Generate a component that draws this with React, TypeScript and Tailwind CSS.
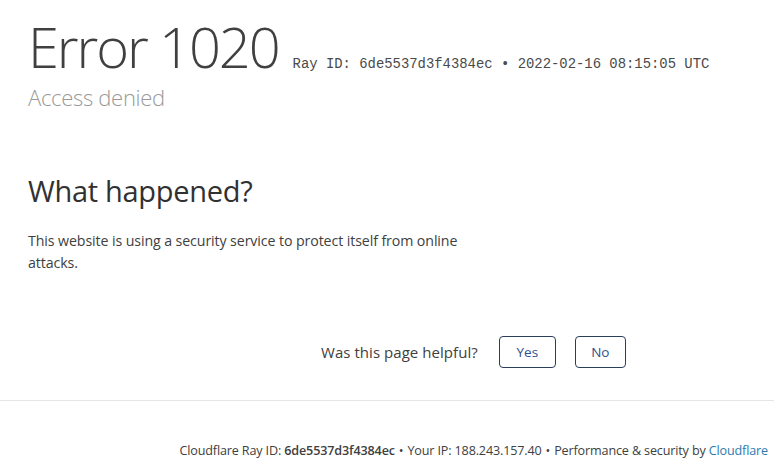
export default function App() {
  return (
    <div className="min-h-[464px] w-[774px] overflow-hidden bg-white font-['Open_Sans','Noto_Sans',sans-serif] text-[#404040]">
      <div className="px-[28px] pt-[16px]">
        <div className="flex items-baseline gap-[14px]">
          <h1 className="text-[56px] font-light leading-[60px] tracking-[-2.1px] text-[#404040]">
            Error 1020
          </h1>
          <span className="font-['Liberation_Mono','Courier_New',monospace] text-[13.9px] text-[#4a4a4a]">
            Ray ID: 6de5537d3f4384ec • 2022-02-16 08:15:05 UTC
          </span>
        </div>
        <h2 className="mt-[6px] text-[22px] font-light leading-[30px] tracking-[-0.3px] text-[#999999]">
          Access denied
        </h2>
      </div>

      <div className="px-[28px] pt-[59px]">
        <h2 className="text-[29px] font-normal leading-[40px] tracking-[-0.3px] text-[#313131]">
          What happened?
        </h2>
        <p className="mt-[19px] max-w-[460px] text-[14.2px] leading-[22px] tracking-[-0.1px] text-[#404040]">
          This website is using a security service to protect itself from online attacks.
        </p>
      </div>

      <div className="mt-[62px] flex items-center pl-[321px]">
        <span className="text-[15px] tracking-[0.05px] text-[#404040]">Was this page helpful?</span>
        <button
          type="button"
          className="ml-[21px] h-[32px] w-[57px] rounded-[4px] border border-[#2c3e57] text-[13.5px] text-[#2f4e8c]"
        >
          Yes
        </button>
        <button
          type="button"
          className="ml-[19px] h-[32px] w-[51px] rounded-[4px] border border-[#2c3e57] text-[13.5px] text-[#2f4e8c]"
        >
          No
        </button>
      </div>

      <div className="mt-[32px] h-px bg-[#e6e6e6]" />

      <div className="flex justify-end pr-[6px] pt-[41px] text-[12.6px] tracking-[-0.15px] text-[#404040]">
        <span>
          Cloudflare Ray ID: <strong className="font-semibold">6de5537d3f4384ec</strong>
          <span className="mx-[4px]">•</span>Your IP: 188.243.157.40
          <span className="mx-[4px]">•</span>Performance &amp; security by{" "}
          <span className="text-[#2c7cb0]">Cloudflare</span>
        </span>
      </div>
    </div>
  );
}
